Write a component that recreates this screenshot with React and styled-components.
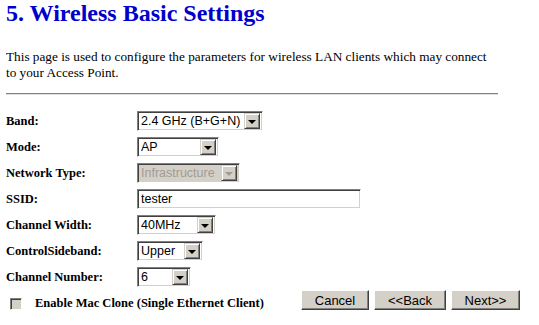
import React from 'react';
import styled, { createGlobalStyle } from 'styled-components';

const GlobalStyle = createGlobalStyle`
  body {
    margin: 0;
    background: #ffffff;
    font-family: "Liberation Serif", "Times New Roman", serif;
  }
`;

const Page = styled.div`
  width: 539px;
  height: 325px;
  padding: 0 6px;
  box-sizing: border-box;
  overflow: hidden;
`;

const Title = styled.h1`
  margin: 0;
  font-size: 24px;
  line-height: 26px;
  font-weight: 700;
  color: #0000cc;
`;

const Intro = styled.p`
  margin: 23px 0 0;
  font-size: 13.25px;
  line-height: 16px;
  color: #000;
  white-space: nowrap;
`;

const Rule = styled.hr`
  width: 492px;
  margin: 12px 0 13px;
  border: 0;
  border-top: 1px solid #808080;
  border-bottom: 1px solid #e0e0e0;
`;

const Form = styled.div`
  display: grid;
  grid-template-columns: 131px auto;
  grid-auto-rows: 26px;
  align-items: center;
`;

const Label = styled.div`
  font-size: 12.5px;
  font-weight: 700;
  color: #000;
`;

const inset = `
  border-top: 1px solid #808080;
  border-left: 1px solid #808080;
  border-right: 1px solid #ffffff;
  border-bottom: 1px solid #ffffff;
  box-shadow: inset 1px 1px 0 #404040, inset -1px -1px 0 #d4d0c8;
`;

const SelectBox = styled.div`
  ${inset}
  width: ${p => p.$w}px;
  height: 20px;
  box-sizing: border-box;
  display: flex;
  align-items: center;
  background: ${p => (p.$disabled ? '#d4d0c8' : '#ffffff')};
  font-family: "Liberation Sans", Arial, sans-serif;
  font-size: 12.5px;
  color: ${p => (p.$disabled ? '#a09c94' : '#000')};
  padding: 2px 2px 2px 3px;
`;

const SelectText = styled.span`
  flex: 1;
  white-space: nowrap;
  overflow: hidden;
  line-height: 14px;
`;

const ArrowButton = styled.span`
  flex: none;
  width: 16px;
  height: 16px;
  box-sizing: border-box;
  background: #d4d0c8;
  border-top: 1px solid #d4d0c8;
  border-left: 1px solid #d4d0c8;
  border-right: 1px solid #404040;
  border-bottom: 1px solid #404040;
  box-shadow: inset 1px 1px 0 #ffffff, inset -1px -1px 0 #808080;
  display: flex;
  align-items: center;
  justify-content: center;

  &::after {
    content: '';
    width: 0;
    height: 0;
    border-left: 4px solid transparent;
    border-right: 4px solid transparent;
    border-top: 4px solid ${p => (p.$disabled ? '#a09c94' : '#000')};
    margin-top: 1px;
  }
`;

const TextInput = styled.div`
  ${inset}
  width: 224px;
  height: 20px;
  box-sizing: border-box;
  padding: 0 3px;
  display: flex;
  align-items: center;
  font-family: "Liberation Sans", Arial, sans-serif;
  font-size: 12.5px;
  color: #000;
`;

const Bottom = styled.div`
  width: 514px;
  display: flex;
  align-items: flex-start;
  justify-content: space-between;
`;

const CheckRow = styled.label`
  display: flex;
  align-items: center;
  gap: 13px;
  padding-left: 4px;
  padding-top: 6px;
  font-size: 12.5px;
  font-weight: 700;
`;

const CheckBox = styled.span`
  ${inset}
  width: 12px;
  height: 12px;
  box-sizing: border-box;
  background: #d4d0c8;
`;

const Buttons = styled.div`
  display: flex;
  gap: 5px;
`;

const Button = styled.button`
  width: ${p => p.$w}px;
  height: 20px;
  padding: 0;
  background: #d4d0c8;
  border-top: 1px solid #ffffff;
  border-left: 1px solid #ffffff;
  border-right: 1px solid #404040;
  border-bottom: 1px solid #404040;
  box-shadow: inset -1px -1px 0 #808080;
  font-family: "Liberation Sans", Arial, sans-serif;
  font-size: 13px;
  color: #000;
`;

const Select = ({ width, value, disabled }) => (
  <SelectBox $w={width} $disabled={disabled}>
    <SelectText>{value}</SelectText>
    <ArrowButton $disabled={disabled} />
  </SelectBox>
);

const rows = [
  { label: 'Band:', width: 126, value: '2.4 GHz (B+G+N)' },
  { label: 'Mode:', width: 82, value: 'AP' },
  { label: 'Network Type:', width: 103, value: 'Infrastructure', disabled: true },
  { label: 'SSID:', input: 'tester' },
  { label: 'Channel Width:', width: 79, value: '40MHz' },
  { label: 'ControlSideband:', width: 66, value: 'Upper' },
  { label: 'Channel Number:', width: 54, value: '6' },
];

export default function App() {
  return (
    <Page>
      <GlobalStyle />
      <Title>5. Wireless Basic Settings</Title>
      <Intro>
        This page is used to configure the parameters for wireless LAN clients which may connect
        <br />
        to your Access Point.
      </Intro>
      <Rule />
      <Form>
        {rows.map(r => (
          <React.Fragment key={r.label}>
            <Label>{r.label}</Label>
            {r.input !== undefined ? (
              <TextInput>{r.input}</TextInput>
            ) : (
              <Select width={r.width} value={r.value} disabled={r.disabled} />
            )}
          </React.Fragment>
        ))}
      </Form>
      <Bottom>
        <CheckRow>
          <CheckBox />
          Enable Mac Clone (Single Ethernet Client)
        </CheckRow>
        <Buttons>
          <Button $w={68}>Cancel</Button>
          <Button $w={72}>&lt;&lt;Back</Button>
          <Button $w={69}>Next&gt;&gt;</Button>
        </Buttons>
      </Bottom>
    </Page>
  );
}
